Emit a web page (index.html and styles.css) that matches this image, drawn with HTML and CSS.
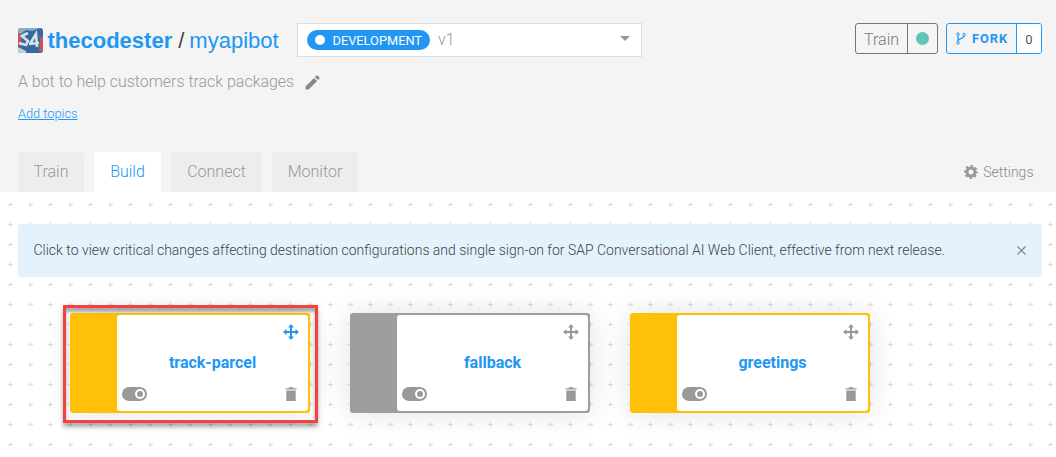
FILE: index.html
```html
<!DOCTYPE html>
<html lang="en">
<head>
<meta charset="utf-8">
<title>myapibot</title>
<link rel="stylesheet" href="styles.css">
</head>
<body>
<svg width="0" height="0" class="defs">
  <symbol id="move" viewBox="0 0 16 16"><path d="M8 0L11 3.500H9V7H12.500V5L16 8L12.500 11V9H9V12.500H11L8 16L5 12.500H7V9H3.500V11L0 8L3.500 5V7H7V3.500H5Z"/></symbol>
  <symbol id="trash" viewBox="0 0 12 14"><path d="M0.500 1.200H3.500L4.500 0H7.500L8.500 1.200H11.500V2.600H0.500ZM1.300 3.500H10.700V14H1.300Z"/></symbol>
</svg>
<header class="header">
  <div class="top">
    <svg class="avatar" viewBox="0 0 25 25">
      <rect width="25" height="25" fill="#3469a5"/>
      <path d="M0 0H22L14 3L8 2L3 6L0 5Z" fill="#8faebb"/>
      <path d="M0 4L3.500 8V19L0 17ZM22 10L25 8V24L21 23Z" fill="#c95557"/>
      <path d="M10 5L4 8L10 13L8 17L1 15M12 16L18 6L19 19M11 16L21 15" fill="none" stroke="#d9e1e5" stroke-width="2.600"/>
      <path d="M0 19L8 23V25H0Z" fill="#c2d2d3"/>
    </svg>
    <h1 class="title"><b>thecodester</b><span class="slash">/</span><span>myapibot</span></h1>
    <div class="select"><span class="pill"><i></i>DEVELOPMENT</span><span class="version">v1</span><i class="caret"></i></div>
    <div class="train"><span>Train</span><span class="status"><i></i></span></div>
    <div class="fork"><span class="fork-label"><svg width="10" height="13" viewBox="0 0 10 13" fill="none" stroke="currentColor"><circle cx="2" cy="2.200" r="1.300"/><circle cx="8" cy="2.700" r="1.300"/><circle cx="2" cy="10.800" r="1.300"/><path d="M2 3.500V9.500M8 4C8 7 2.500 5.500 2 9" stroke-width="1.300"/></svg>FORK</span><span class="count">0</span></div>
  </div>
  <p class="description"><span>A bot to help customers track packages</span><svg width="15" height="15" viewBox="0 0 15 15"><path d="M0.500 11.400L9 2.900L12.100 6L3.600 14.500H0.500ZM9.900 2L11.200 0.700Q12 0 12.700 0.700L14.300 2.300Q15 3 14.300 3.800L13 5.100Z"/></svg></p>
  <a class="topics">Add topics</a>
  <nav class="tabs">
    <a class="tab t1">Train</a><a class="tab t2 active">Build</a><a class="tab t3">Connect</a><a class="tab t4">Monitor</a>
    <a class="settings"><svg width="14" height="14" viewBox="0 0 14 14"><circle cx="7" cy="7" r="4" fill="none" stroke="#999" stroke-width="3"/><circle cx="7" cy="7" r="5.900" fill="none" stroke="#999" stroke-width="2.200" stroke-dasharray="2.500 2.134" stroke-dashoffset="1.250"/></svg>Settings</a>
  </nav>
</header>
<main class="canvas">
  <div class="notice"><span>Click to view critical changes affecting destination configurations and single sign-on for SAP Conversational AI Web Client, effective from next release.</span><svg width="9" height="9" viewBox="0 0 9 9"><path d="M0.500 0.500L8.500 8.500M8.500 0.500L0.500 8.500" stroke="#888" stroke-width="1.200"/></svg></div>
  <div class="cards">
    <article class="card selected"><div class="body"><svg class="move"><use href="#move"/></svg><h2>track-parcel</h2><div class="foot"><span class="toggle"><i></i></span><svg class="trash"><use href="#trash"/></svg></div></div></article>
    <article class="card gray"><div class="body"><svg class="move"><use href="#move"/></svg><h2>fallback</h2><div class="foot"><span class="toggle"><i></i></span><svg class="trash"><use href="#trash"/></svg></div></div></article>
    <article class="card"><div class="body"><svg class="move"><use href="#move"/></svg><h2>greetings</h2><div class="foot"><span class="toggle"><i></i></span><svg class="trash"><use href="#trash"/></svg></div></div></article>
  </div>
</main>
</body>
</html>
```

FILE: styles.css
```css
* { box-sizing: border-box; }
body { margin: 0; height: 457px; overflow: hidden; display: flex; flex-direction: column; font-family: Roboto, sans-serif; font-weight: 300; background: #fff; }
.defs { position: absolute; }
.header { height: 192px; flex: none; background: #f4f4f4; padding: 23px 14px 0 18px; display: flex; flex-direction: column; }
.top { height: 34px; display: flex; align-items: flex-start; }
.avatar { width: 25px; height: 25px; margin-top: 5px; border-radius: 3px; flex: none; filter: blur(.4px); }
.title { margin: 0 0 0 4.500px; width: 249.500px; font: 400 22px/35px "Liberation Sans", Arial, sans-serif; color: #2196f3; white-space: nowrap; }
.slash { color: #444; margin: 0 5px 0 6px; }
.select { width: 345px; height: 34px; border: 1px solid #ddd; background: #fff; display: flex; align-items: center; padding: 0 11px 0 9px; }
.pill { width: 123px; height: 20px; border-radius: 10px; background: #2196f3; color: #fff; font-size: 12.8px; font-weight: 400; display: flex; align-items: center; padding-left: 8px; gap: 7.5px; }
.pill i { width: 10px; height: 10px; border-radius: 50%; background: #fff; }
.version { margin: -2px 0 0 8px; font-size: 16px; color: #999; }
.caret { margin: -3px 0 0 auto; border: 5px solid transparent; border-top-color: #999; border-bottom: 0; }
.train, .fork { height: 31px; border: 1px solid #757575; border-radius: 3px; display: flex; overflow: hidden; }
.train { width: 83px; margin-left: auto; font-size: 16px; line-height: 31px; color: #777; padding-left: 8px; }
.status { width: 30px; margin-left: auto; border-left: 1px solid #757575; display: flex; align-items: center; justify-content: center; }
.status i { width: 13px; height: 13px; border-radius: 50%; background: #5dc5b4; }
.fork { width: 96px; margin-left: 8px; border-color: #2196f3; color: #2196f3; }
.fork-label { flex: 1; display: flex; align-items: center; gap: 6px; padding-left: 9px; font-size: 12.800px; font-weight: 700; letter-spacing: 1px; }
.count { width: 25px; background: #fff; border-left: 1px solid #2196f3; color: #555; font-size: 13px; font-weight: 400; line-height: 32px; text-align: center; }
.description { margin: 15px 0 0; font-size: 15.950px; line-height: 20px; color: #999; display: flex; align-items: center; gap: 11px; }
.description svg { fill: #888; }
.topics { margin-top: 14px; font-size: 12.800px; line-height: 16px; color: #2196f3; text-decoration: underline; align-self: flex-start; }
.tabs { margin-top: auto; height: 40px; display: flex; }
.tab { height: 40px; margin-right: 10px; border-radius: 3px 3px 0 0; background: #ededed; color: #999; font-size: 16px; line-height: 39px; text-align: center; }
.t1 { width: 66px; }
.t2 { width: 67px; }
.t3 { width: 91px; }
.t4 { width: 86px; }
.active { background: #fff; color: #2196f3; }
.settings { margin-left: auto; padding-right: 8.500px; display: flex; align-items: center; gap: 5px; font-size: 14px; color: #888; }
.canvas { flex: 1; padding: 32px 14px 0 18px; background: url("data:image/svg+xml,%3Csvg xmlns='http://www.w3.org/2000/svg' width='20' height='20'%3E%3Cpath d='M8 12.500H13M10.500 10V15' stroke='%23dcdcdc'/%3E%3C/svg%3E"); }
.notice { height: 53px; background: #e3f2fd; border-radius: 3px; padding: 0 16px 0 15.500px; display: flex; align-items: center; justify-content: space-between; font-size: 13.990px; color: #444; white-space: nowrap; }
.notice span { padding-bottom: 2px; }
.cards { display: flex; gap: 40px; padding: 36px 0 0 52px; }
.card { width: 240px; height: 100px; padding: 2px 2px 2px 47px; border-radius: 3px; background: #ffc107; box-shadow: 0 0 30px rgba(0,0,0,.12); }
.gray { background: #9e9e9e; }
.body { height: 96px; background: #fff; border-radius: 3px; display: flex; flex-direction: column; padding: 9px 9px 10px 5px; }
.move { width: 16px; height: 16px; fill: #999; align-self: flex-end; }
.card h2 { margin: 13px 0 0 4px; font-size: 16px; line-height: 20px; font-weight: 700; color: #2196f3; text-align: center; }
.foot { margin-top: auto; display: flex; justify-content: space-between; align-items: center; padding-right: 2px; }
.toggle { width: 25px; height: 14px; border-radius: 7px; background: #999; padding: 2px; display: flex; justify-content: flex-end; }
.toggle i { width: 10px; height: 10px; border: 2px solid #fff; border-radius: 50%; }
.trash { width: 12px; height: 14px; fill: #999; }
.selected { position: relative; }
.selected .move { fill: #2196f3; }
.selected::after { content: ""; position: absolute; inset: -8px -8px -10px -7px; border: 3px solid #f44141; box-shadow: 0 4px 4px rgba(0,0,0,.3), inset 0 4px 3px rgba(0,0,0,.3); }
```
